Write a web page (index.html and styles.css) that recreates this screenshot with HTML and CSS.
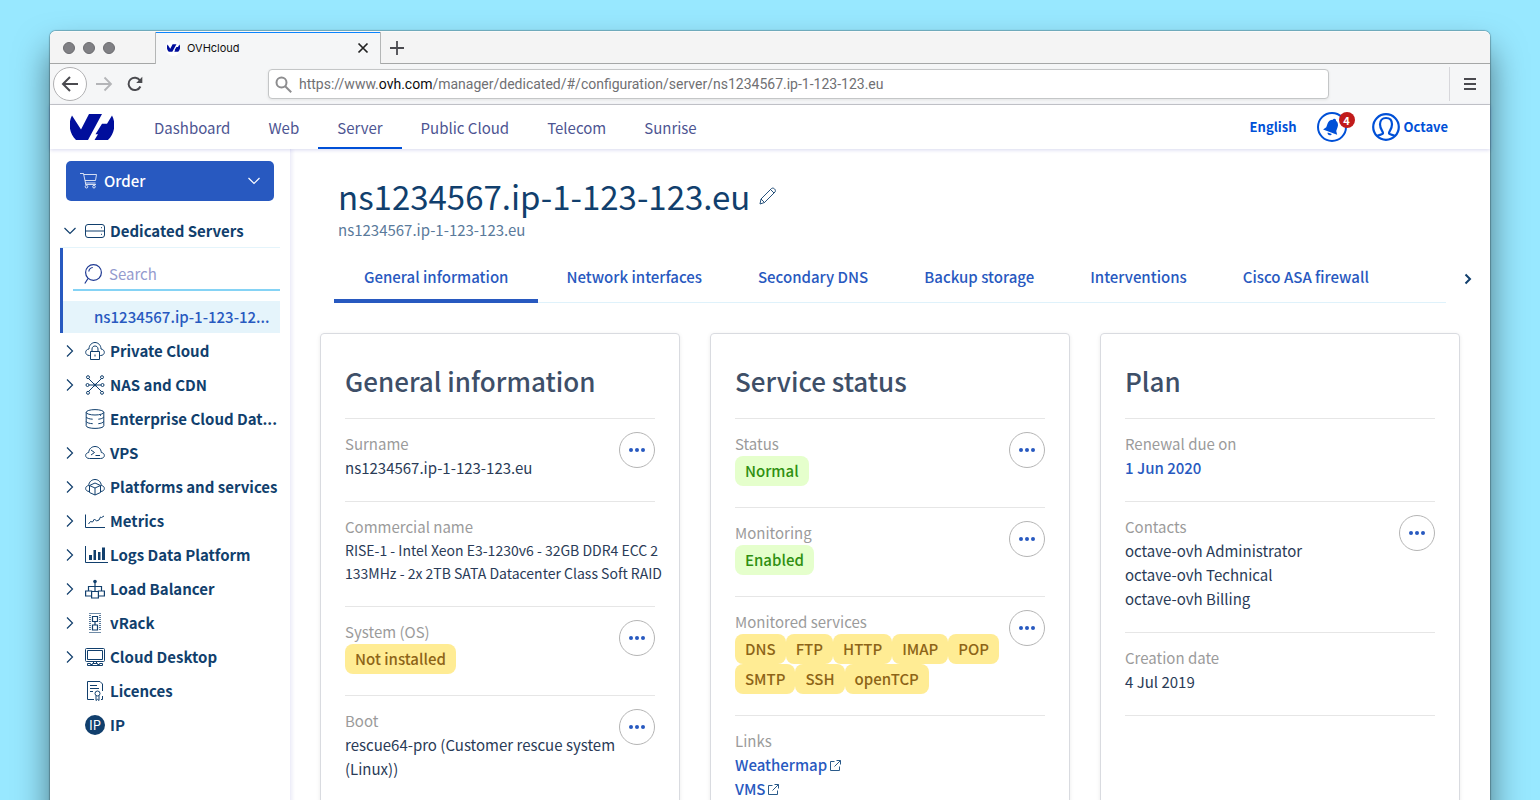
FILE: index.html
```html
<!DOCTYPE html>
<html lang="en">
<head>
<meta charset="utf-8">
<title>OVHcloud</title>
<link rel="stylesheet" href="styles.css">
</head>
<body>
<div class="window">
  <div class="titlebar">
    <div class="lights"><i></i><i></i><i></i></div>
    <div class="browser-tab">
      <span class="favicon"><svg viewBox="0 0 44 26" width="13" height="8"><use href="#logo"/></svg></span>
      <span class="tab-title">OVHcloud</span>
      <button class="plain" aria-label="Close tab"><svg width="12" height="12" viewBox="0 0 12 12" stroke="#222" stroke-width="1.7"><path d="M1.500 1.500l9 9M10.500 1.500l-9 9"/></svg></button>
    </div>
    <button class="plain new-tab" aria-label="New tab"><svg width="16" height="16" viewBox="0 0 16 16" stroke="#4a4a4f" stroke-width="1.8"><path d="M8 1v14M1 8h14"/></svg></button>
  </div>
  <div class="toolbar">
    <div class="history">
      <button class="plain back" aria-label="Back"><svg width="18" height="16" viewBox="0 0 18 16" fill="none" stroke="#4a4a4f" stroke-width="2"><path d="M17 8H2M9 1L2 8l7 7"/></svg></button>
      <button class="plain" aria-label="Forward"><svg width="18" height="16" viewBox="0 0 18 16" fill="none" stroke="#b4b5b8" stroke-width="1.800"><path d="M1 8h15M9.500 1.500L16 8l-6.500 6.500"/></svg></button>
      <button class="plain reload" aria-label="Reload"><svg width="16" height="16" viewBox="0 0 16 16" fill="none" stroke="#4a4a4f" stroke-width="2"><path d="M13 4.500A6.200 6.200 0 1 0 13.400 10.500"/><path d="M15.300 .8v6.200H9.200z" fill="#4a4a4f" stroke="none"/></svg></button>
    </div>
    <div class="urlbar">
      <svg width="17" height="17" viewBox="0 0 17 17" fill="none" stroke="#8d8d8f" stroke-width="2"><circle cx="6.500" cy="6.500" r="5"/><path d="M10.200 10.200l6 6"/></svg>
      <span class="url">https://www.<b>ovh.com</b>/manager/dedicated/#/configuration/server/ns1234567.ip-1-123-123.eu</span>
    </div>
    <button class="plain menu" aria-label="Menu"><svg width="12" height="12" viewBox="0 0 12 12" fill="#4a4a4f"><path d="M0 0h12v2H0zM0 5h12v2H0zM0 10h12v2H0z"/></svg></button>
  </div>

  <header class="topnav">
    <a class="logo" href="#" aria-label="OVHcloud"><svg width="44" height="26" viewBox="0 0 44 26"><g id="logo" fill="#000e9c"><path d="M2 1.500L11 15.500 19 0H32L18 26H6C-1 19-2 9 2 1.500z"/><path d="M42 1.500C46 9 45 19 38 26H24.500L28 20.300H25.500L32 9.800H37z"/></g></svg></a>
    <nav class="sections">
      <a href="#">Dashboard</a><a href="#">Web</a><a href="#" class="active">Server</a><a href="#">Public Cloud</a><a href="#">Telecom</a><a href="#">Sunrise</a>
    </nav>
    <div class="account">
      <a href="#">English</a>
      <button class="plain bell" aria-label="Notifications"><svg width="30" height="30" viewBox="0 0 30 30"><circle cx="15" cy="15" r="14" fill="#fff" stroke="#0050d7" stroke-width="2"/><path transform="rotate(20 15 15)" d="M15 6.500c1.200 0 1.600.7 1.600 1.300 2.600.8 3.700 3 3.700 5.500v3.900l2.200 3.300H7.500l2.200-3.300v-3.900c0-2.500 1.100-4.700 3.700-5.500 0-.6.400-1.300 1.600-1.300zM12.800 21.600h4.400c0 2.600-4.400 2.600-4.400 0z" fill="#0050d7"/></svg><span class="count">4</span></button>
      <a href="#" class="user"><svg width="28" height="28" viewBox="0 0 28 28" fill="none" stroke="#0050d7" stroke-width="2.200"><circle cx="14" cy="14" r="12.800"/><path d="M5 23.300c1.500-1.600 6-1.400 6-3.300 0-2-3-3.700-3-8.700 0-4 2.300-6.300 6-6.300s6 2.300 6 6.300c0 5-3 6.700-3 8.700 0 1.900 4.500 1.700 6 3.300"/></svg>Octave</a>
    </div>
  </header>

  <div class="page">
    <aside class="sidebar">
      <button class="order"><svg width="18" height="16" viewBox="0 0 18 16" fill="none" stroke="#fff" stroke-width=".8"><path d="M0 .5h3.500l2 9.500H15.500M3.800 1.500H16.500L15.500 7.500H5M5.500 10v1.500H16"/><circle cx="6.500" cy="13.700" r="1.300"/><circle cx="14" cy="13.700" r="1.300"/></svg><span>Order</span><svg width="12" height="8" viewBox="0 0 12 8" fill="none" stroke="#fff" stroke-width="1.200"><path d="M.5 1l5.500 5.500L11.500 1"/></svg></button>
      <ul class="tree">
        <li class="node open"><a href="#"><svg class="chev" width="12" height="8" viewBox="0 0 12 8"><path d="M.5 1l5.500 5.500L11.500 1"/></svg><svg class="icon" width="20" height="20" viewBox="0 0 20 20"><rect x=".5" y="3.500" width="19" height="13" rx="2.500"/><path d="M.5 10h19M16.500 6.200v1M16.500 12.800v1"/></svg><span>Dedicated Servers</span></a>
          <div class="sub">
            <label class="search"><svg width="18" height="20" viewBox="0 0 18 20" fill="none" stroke="#1f3a93" stroke-width="1.200"><circle cx="9.500" cy="8.500" r="7.900"/><path d="M4 14.500L.8 19.500M4.800 7.500c.3-2.300 1.800-3.700 4-4" /></svg><input type="text" placeholder="Search" aria-label="Search"></label>
            <a class="leaf" href="#">ns1234567.ip-1-123-12...</a>
          </div>
        </li>
        <li class="node"><a href="#"><svg class="chev" width="8" height="12" viewBox="0 0 8 12"><path d="M1 .5L6.500 6 1 11.500"/></svg><svg class="icon" width="20" height="20" viewBox="0 0 20 20"><path d="M5.500 14.500H4.500C-.5 14.500-.5 8.500 4 8 4 4 7 1.500 10 1.500S16 4 16 8c4.500.5 4.500 6.500-.5 6.500h-1"/><path d="M5.500 10.500h9v8h-9zM7 10.500V8c0-4 6-4 6 0v2.500M10 13.500v2"/></svg><span>Private Cloud</span></a></li>
        <li class="node"><a href="#"><svg class="chev" width="8" height="12" viewBox="0 0 8 12"><path d="M1 .5L6.500 6 1 11.500"/></svg><svg class="icon" width="20" height="20" viewBox="0 0 20 20"><path d="M3.500 3.500L16.500 16.500M16.500 3.500L3.500 16.500M4 10h12"/><g fill="#fff"><circle cx="3" cy="2.200" r="1.500"/><circle cx="17" cy="2.200" r="1.500"/><circle cx="2.500" cy="10" r="1.500"/><circle cx="17.500" cy="10" r="1.500"/><circle cx="3" cy="17.800" r="1.500"/><circle cx="17" cy="17.800" r="1.500"/></g><circle cx="10" cy="10" r="1" fill="#113f6d"/></svg><span>NAS and CDN</span></a></li>
        <li class="node"><a href="#"><i class="chev"></i><svg class="icon" width="20" height="20" viewBox="0 0 20 20"><ellipse cx="10" cy="3.300" rx="8.800" ry="2.700"/><path d="M1.200 3.300v13.400c0 3.600 17.600 3.600 17.600 0V3.300M1.200 8c.8 1.500 3.500 2 6.500 2.200M18.800 8c-.8 1.200-3 2-5.500 2.200M1.200 12.500c.8 1.500 3.500 2 6.500 2.200M18.800 12.500c-.8 1.200-3 2-5.500 2.200M15.500 6v.8"/></svg><span>Enterprise Cloud Dat...</span></a></li>
        <li class="node"><a href="#"><svg class="chev" width="8" height="12" viewBox="0 0 8 12"><path d="M1 .5L6.500 6 1 11.500"/></svg><svg class="icon" width="20" height="20" viewBox="0 0 20 20"><path d="M4.500 15.500c-5 0-5-5.500-.8-6C4 5.500 7 3.500 10 3.500s6 2 6.300 6c4.200.5 4.200 6-.8 6zM6 7l3.500 2.500L6 12M10.500 12.500H15"/></svg><span>VPS</span></a></li>
        <li class="node"><a href="#"><svg class="chev" width="8" height="12" viewBox="0 0 8 12"><path d="M1 .5L6.500 6 1 11.500"/></svg><svg class="icon" width="20" height="20" viewBox="0 0 20 20"><path d="M4.500 14.500C-.5 14.500-.5 9 3.700 8.500 4 4.500 7 2.500 10 2.500s6 2 6.300 6c4.200.5 4.200 6-.8 6"/><path d="M10 6l5.500 2.500v7L10 18l-5.500-2.500v-7zM4.500 8.500L10 11l5.500-2.500M10 11v7"/></svg><span>Platforms and services</span></a></li>
        <li class="node"><a href="#"><svg class="chev" width="8" height="12" viewBox="0 0 8 12"><path d="M1 .5L6.500 6 1 11.500"/></svg><svg class="icon" width="20" height="20" viewBox="0 0 20 20"><path d="M.5 3.500v13H20M3.500 13l2-2.500 2 .5L9.500 8l2 2 2.500-1 1.500-3 1 .5L19 5"/></svg><span>Metrics</span></a></li>
        <li class="node"><a href="#"><svg class="chev" width="8" height="12" viewBox="0 0 8 12"><path d="M1 .5L6.500 6 1 11.500"/></svg><svg class="icon" width="20" height="20" viewBox="0 0 20 20"><path d="M.5 1v16.500H23"/><path d="M4 10h3v5H4zM8.500 5h2.500v10H8.500zM13 7h2.500v8H13zM17 2.500h3V15h-3z" fill="#113f6d" stroke="none"/></svg><span>Logs Data Platform</span></a></li>
        <li class="node"><a href="#"><svg class="chev" width="8" height="12" viewBox="0 0 8 12"><path d="M1 .5L6.500 6 1 11.500"/></svg><svg class="icon" width="20" height="20" viewBox="0 0 20 20" stroke-width="1.200"><circle cx="10" cy="2.500" r="1.200" fill="#113f6d"/><path d="M10 3v9M3.500 12V7.500h13V12M.6 12h6v5h-6zM13.400 12h6v5h-6zM6.600 12.500h6.800v6.500H6.600z"/></svg><span>Load Balancer</span></a></li>
        <li class="node"><a href="#"><svg class="chev" width="8" height="12" viewBox="0 0 8 12"><path d="M1 .5L6.500 6 1 11.500"/></svg><svg class="icon" width="20" height="20" viewBox="0 0 20 20"><path d="M4 .5h12M4 19.500h12" opacity=".6"/><path d="M5 2v16M15 2v16" stroke-width="2" stroke-dasharray="1 1" opacity=".7"/><path d="M7.500 3.500h5v5h-5zM7.500 12h5v5h-5zM10 8.500V12" stroke-width="1.200"/></svg><span>vRack</span></a></li>
        <li class="node"><a href="#"><svg class="chev" width="8" height="12" viewBox="0 0 8 12"><path d="M1 .5L6.500 6 1 11.500"/></svg><svg class="icon" width="20" height="20" viewBox="0 0 20 20"><rect x=".5" y="1.500" width="19" height="13" rx="1"/><path d="M2.500 3.500h15v9h-15zM8.500 14.500v2M11.500 14.500v2M2.500 18.500v-2h3v1h2v-1h5v1h2v-1h3v2z"/></svg><span>Cloud Desktop</span></a></li>
        <li class="node"><a href="#"><i class="chev"></i><svg class="icon" width="20" height="20" viewBox="0 0 20 20"><path d="M9 18.500H2.500V.5H15l2.500 2.500v7M17.500 15v3.500H16M5 4.500h7M5 7.500h9M5 10.500h3" /><circle cx="12.500" cy="12.500" r="2.500"/><path d="M11 14.800v4.700l1.500-1.200 1.500 1.200v-4.700"/></svg><span>Licences</span></a></li>
        <li class="node"><a href="#"><i class="chev"></i><b class="ip">IP</b><span>IP</span></a></li>
      </ul>
    </aside>

    <main class="main">
      <div class="heading"><h1>ns1234567.ip-1-123-123.eu</h1><button class="plain" aria-label="Edit name"><svg width="18" height="18" viewBox="0 0 18 18" fill="none" stroke="#113f6d" stroke-width=".9"><path d="M1 17l1-5L12.500 1.500c2-1.500 5 1.500 3.500 3.500L5.500 15.500zM2 12l3.500 3.500M11.500 2.500l3.500 3.500"/></svg></button></div>
      <p class="subtitle">ns1234567.ip-1-123-123.eu</p>
      <div class="tabs-row">
        <nav class="tabs"><a href="#" class="active">General information</a><a href="#">Network interfaces</a><a href="#">Secondary DNS</a><a href="#">Backup storage</a><a href="#">Interventions</a><a href="#">Cisco ASA firewall</a></nav>
        <button class="plain next" aria-label="More tabs"><svg width="8" height="12" viewBox="0 0 8 12" fill="none" stroke="#113f6d" stroke-width="2"><path d="M1.500 1.500L6 6l-4.500 4.500"/></svg></button>
      </div>
      <div class="cards">
        <section class="card">
          <h2>General information</h2>
          <div class="item"><dl><dt>Surname</dt><dd>ns1234567.ip-1-123-123.eu</dd></dl><button class="more" aria-label="Actions"><i></i><i></i><i></i></button></div>
          <div class="item"><dl><dt>Commercial name</dt><dd class="compact">RISE-1 - Intel Xeon E3-1230v6 - 32GB DDR4 ECC 2<br>133MHz - 2x 2TB SATA Datacenter Class Soft RAID</dd></dl></div>
          <div class="item"><dl><dt>System (OS)</dt><dd class="badges"><span class="badge warn">Not installed</span></dd></dl><button class="more" aria-label="Actions"><i></i><i></i><i></i></button></div>
          <div class="item"><dl><dt>Boot</dt><dd>rescue64-pro (Customer rescue system (Linux))</dd></dl><button class="more" aria-label="Actions"><i></i><i></i><i></i></button></div>
        </section>
        <section class="card">
          <h2>Service status</h2>
          <div class="item"><dl><dt>Status</dt><dd class="badges"><span class="badge ok">Normal</span></dd></dl><button class="more" aria-label="Actions"><i></i><i></i><i></i></button></div>
          <div class="item"><dl><dt>Monitoring</dt><dd class="badges"><span class="badge ok">Enabled</span></dd></dl><button class="more" aria-label="Actions"><i></i><i></i><i></i></button></div>
          <div class="item"><dl><dt>Monitored services</dt><dd class="badges"><span class="badge warn">DNS</span><span class="badge warn">FTP</span><span class="badge warn">HTTP</span><span class="badge warn">IMAP</span><span class="badge warn">POP</span><span class="badge warn">SMTP</span><span class="badge warn">SSH</span><span class="badge warn">openTCP</span></dd></dl><button class="more" aria-label="Actions"><i></i><i></i><i></i></button></div>
          <div class="item"><dl><dt>Links</dt><dd><a href="#">Weathermap<svg class="ext" width="11" height="11" viewBox="0 0 11 11"><path d="M4.500 1.500h-4v9h9v-4M6.500.5h4v4M10.500.5l-6 6"/></svg></a></dd><dd><a href="#">VMS<svg class="ext" width="11" height="11" viewBox="0 0 11 11"><path d="M4.500 1.500h-4v9h9v-4M6.500.5h4v4M10.500.5l-6 6"/></svg></a></dd></dl></div>
        </section>
        <section class="card">
          <h2>Plan</h2>
          <div class="item"><dl><dt>Renewal due on</dt><dd><a href="#">1 Jun 2020</a></dd></dl></div>
          <div class="item"><dl><dt>Contacts</dt><dd>octave-ovh Administrator</dd><dd>octave-ovh Technical</dd><dd>octave-ovh Billing</dd></dl><button class="more" aria-label="Actions"><i></i><i></i><i></i></button></div>
          <div class="item last"><dl><dt>Creation date</dt><dd>4 Jul 2019</dd></dl></div>
        </section>
      </div>
    </main>
  </div>
</div>
</body>
</html>
```
FILE: styles.css
```css
* { box-sizing: border-box; }
html { height: 100%; }
body {
  margin: 0;
  height: 100%;
  overflow: hidden;
  background: #98e8ff;
  font: 15px/24px "Noto Sans CJK SC", "Open Sans", sans-serif;
  color: #113f6d;
}
a { color: inherit; text-decoration: none; }
ul, dl, dd, p, h1, h2 { margin: 0; padding: 0; }
ul { list-style: none; }
button { font: inherit; cursor: pointer; }
svg { flex: none; display: block; }
.plain { border: 0; background: none; padding: 0; display: flex; align-items: center; justify-content: center; }

.window {
  margin: 31px 50px 0;
  border-radius: 6px 6px 0 0;
  background: #fff;
  box-shadow: 0 0 1px 1px rgba(0, 0, 0, .25), 0 20px 34px rgba(0, 0, 0, .5);
}

/* Browser chrome */
.titlebar { display: flex; height: 33px; background: #f4f4f4; border-radius: 6px 6px 0 0; border-top: 1px solid #fafafa; border-bottom: 1px solid #a5a7a7; }
.lights { display: flex; gap: 8px; align-items: center; width: 105px; padding-left: 13px; }
.lights i { width: 12px; height: 12px; border-radius: 50%; background: #808084; border: 1px solid #6c6c70; }
.browser-tab {
  display: flex; align-items: center; width: 226px; height: 32px; padding: 0 11px 0 10px;
  background: #f5f6f7; border: 1px solid #b4b6b6; border-width: 0 1px; box-shadow: inset 0 1px #0a84ff;
  font: 11px/16px Inter, sans-serif; color: #111;
}
.favicon { display: flex; align-items: center; justify-content: center; width: 14px; height: 16px; background: #fff; border-radius: 8px; }
.tab-title { flex: 1; padding-left: 7px; }
.new-tab { width: 32px; }
.toolbar { display: flex; align-items: center; height: 41px; background: #f5f6f7; border-bottom: 1px solid #c6c7c8; }
.history { display: flex; align-items: center; width: 218px; padding-left: 3px; gap: 8px; }
.back { width: 34px; height: 34px; border: 1px solid #b1b1b3; border-radius: 50%; background: #fff; }
.reload { margin-left: 6px; }
.urlbar {
  flex: 1; display: flex; align-items: center; gap: 7px; height: 30px; padding: 0 6px;
  background: #fff; border: 1px solid #c4c6c7; border-radius: 4px; box-shadow: 0 1px 3px rgba(0, 0, 0, .08);
  font: 14px/20px Roboto, sans-serif; color: #707073;
}
.url b { font-weight: 400; color: #0c0c0d; }
.menu { width: 41px; height: 34px; margin-left: 120px; border-left: 1px solid #d7d7db; }

/* Product navigation */
.topnav { position: relative; display: flex; height: 44px; padding: 0 42px 0 20px; background: #fff; box-shadow: 0 1px 4px rgba(0, 14, 156, .16); }
.logo { display: flex; align-items: center; width: 65px; }
.sections { display: flex; }
.sections a { display: flex; align-items: center; padding: 4px 19px 0; color: #4d5592; border-bottom: 2px solid transparent; }
.sections .active { border-color: #0050d7; }
.account { display: flex; align-items: center; margin-left: auto; font-size: 13px; font-weight: 700; color: #0050d7; }
.bell { position: relative; width: 30px; height: 30px; margin: 0 25px 0 20px; }
.count { position: absolute; right: -8px; top: 0; width: 16px; height: 16px; border-radius: 50%; background: #c11b1b; color: #fff; font-size: 11px; line-height: 16px; font-weight: 700; }
.user { display: flex; align-items: center; gap: 4px; }

.page { display: flex; align-items: stretch; min-height: 680px; }

/* Sidebar */
.sidebar { width: 241px; flex: none; padding: 12px 10px 0; border-right: 1px solid #eeeef9; box-shadow: 2px 0 3px rgba(0, 14, 156, .06); }
.order { display: flex; align-items: center; gap: 6px; width: 208px; height: 40px; margin: 0 6px 13px; padding: 0 14px; border: 0; border-radius: 5px; background: #2859c0; color: #fff; font-weight: 500; }
.order span { flex: 1; text-align: left; }
.node > a { display: flex; align-items: center; height: 34px; font-weight: 700; padding-left: 4px; white-space: nowrap; }
.chev { width: 12px; margin-right: 9px; flex: none; fill: none; stroke: #113f6d; stroke-width: 1.2; }
.icon { width: 20px; margin-right: 5px; overflow: visible; fill: none; stroke: #113f6d; }
.ip { width: 20px; height: 20px; margin-right: 5px; border-radius: 50%; background: #113f6d; color: #fff; font-size: 13px; font-weight: 400; line-height: 20px; text-align: center; }
.sub { border-left: 3px solid #2859c0; margin-bottom: 1px; box-shadow: 0 -1px #e4f4fb; }
.search { display: flex; align-items: center; gap: 7px; height: 43px; margin: 0 0 10px 10px; padding: 11px 0 0 11px; border-bottom: 2px solid #85d3f5; }
.search input { width: 100%; min-width: 0; border: 0; outline: 0; padding: 0; font: inherit; background: none; color: #4d5592; }
.search input::placeholder { color: #949bce; opacity: 1; }
.leaf { display: block; height: 32px; padding-left: 31px; line-height: 32px; background: #e5f4fb; color: #2859c0; font-weight: 500; white-space: nowrap; }

/* Main column */
.main { flex: 1; min-width: 0; padding: 24px 30px 0 29px; }
.heading { display: flex; align-items: center; gap: 9px; padding-left: 18px; }
h1 { font-size: 33px; line-height: 46px; font-weight: 400; }
.subtitle { padding-left: 18px; line-height: 22px; color: #5a7a9b; }
.tabs-row { display: flex; align-items: center; padding-left: 14px; margin-bottom: 30px; }
.tabs { flex: 1; display: flex; border-bottom: 1px solid #dff2fb; }
.tabs a { padding: 24px 28px 10px; margin-bottom: -1px; height: 62px; font-weight: 500; color: #2859c0; white-space: nowrap; }
.tabs .active { padding: 24px 30px 10px; border-bottom: 4px solid #2859c0; }
.next { margin: 14px -12px 0 18px; width: 8px; }

.cards { display: grid; grid-template-columns: repeat(3, 1fr); gap: 30px; align-items: stretch; }
.card { min-width: 0; padding: 24px 24px 40px; border: 1px solid #d9dbe0; border-radius: 4px; box-shadow: 0 1px 4px rgba(0, 0, 0, .08); }
h2 { font-size: 26px; line-height: 46px; margin-bottom: 14px; font-weight: 500; color: #3e4f68; }
.item { display: flex; align-items: flex-start; padding: 13px 0 21px; border-top: 1px solid #e6e6e6; }
.last { border-bottom: 1px solid #e6e6e6; }
.item dl { flex: 1; min-width: 0; }
dt { color: #9b9b9b; }
dd { color: #2a3b57; }
dd a { display: inline-flex; align-items: center; gap: 3px; color: #2859c0; font-weight: 500; }
.compact { font-size: 14px; line-height: 23px; white-space: nowrap; }
.badges { display: flex; flex-wrap: wrap; }
.badge { height: 30px; padding: 0 10px; border-radius: 8px; line-height: 30px; font-weight: 500; }
.ok { background: #e5ffcc; color: #2f9010; }
.warn { background: #ffec94; color: #8d6417; }
.more { display: flex; align-items: center; justify-content: center; gap: 2px; width: 36px; height: 36px; flex: none; padding: 0; border: 1px solid #b5b5b5; border-radius: 50%; background: #fff; }
.more i { width: 4px; height: 4px; border-radius: 50%; background: #2859c0; }
.ext { fill: none; stroke: #2a5a8a; stroke-width: 1; }
```
